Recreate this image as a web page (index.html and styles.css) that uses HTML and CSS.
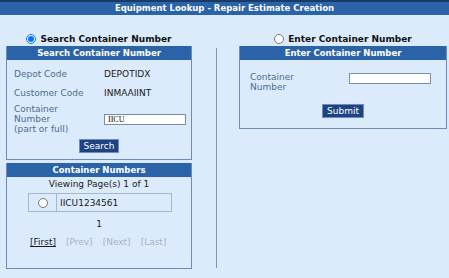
FILE: index.html
```html
<!DOCTYPE html>
<html>
  <head>
    <meta charset="utf-8" />
    <title>Equipment Lookup - Repair Estimate Creation</title>
    <link rel="stylesheet" href="styles.css">
  </head>
  <body>
    <!-- Page title bar -->
    <div class="titlebar">Equipment Lookup - Repair Estimate Creation</div>

    <div class="main">
      <!-- LEFT: search by partial number -->
      <div class="column left-col">
        <label class="choice">
          <input type="radio" name="mode" checked />
          <span>Search Container Number</span>
        </label>

        <div class="panel search-panel">
          <div class="panel-head">Search Container Number</div>
          <div class="form-grid">
            <span class="lbl">Depot Code</span>
            <span class="val">DEPOTIDX</span>
            <span class="lbl">Customer Code</span>
            <span class="val">INMAAIINT</span>
            <span class="lbl tall">Container<br />Number<br />(part or full)</span>
            <span class="val tall"><input type="text" class="txt" value="IICU" /></span>
          </div>
          <div class="btn-row"><button class="btn">Search</button></div>
        </div>

        <div class="panel results-panel">
          <div class="panel-head">Container Numbers</div>
          <p class="viewing">Viewing Page(s) 1 of 1</p>
          <table class="results">
            <tr>
              <td class="pick"><input type="radio" name="container" /></td>
              <td class="num">IICU1234561</td>
            </tr>
          </table>
          <p class="page-no">1</p>
          <div class="pager">
            <a href="#" class="on">[First]</a>
            <span>[Prev]</span>
            <span>[Next]</span>
            <span>[Last]</span>
          </div>
        </div>
      </div>

      <div class="divider"></div>

      <!-- RIGHT: enter full number -->
      <div class="column right-col">
        <label class="choice">
          <input type="radio" name="mode" />
          <span>Enter Container Number</span>
        </label>

        <div class="panel enter-panel">
          <div class="panel-head">Enter Container Number</div>
          <div class="enter-row">
            <span class="lbl">Container<br />Number</span>
            <input type="text" class="txt" />
          </div>
          <div class="btn-row"><button class="btn">Submit</button></div>
        </div>
      </div>
    </div>
  </body>
</html>
```

FILE: styles.css
```css
/* reset */
* {
  box-sizing: border-box;
  margin: 0;
  padding: 0;
}

body {
  font-family: 'DejaVu Sans', Verdana, sans-serif;
  font-size: 9px;
  background-color: #dcebfc;
  color: #1a1a1a;
  width: 449px;
  height: 278px;
  overflow: hidden;
}

/* top title bar */
.titlebar {
  height: 15px;
  line-height: 13px;
  border-top: 2px solid #173a66;
  background-color: #2b63a8;
  color: #ffffff;
  font-weight: bold;
  font-size: 8.5px;
  text-align: center;
}

.main {
  display: flex;
  padding-left: 6px;
}

.left-col {
  width: 186px;
}

.right-col {
  width: 208px;
}

.divider {
  width: 1px;
  height: 220px;
  margin: 33px 22px 0 24px;
  background-color: #8294ad;
}

/* radio choice above each panel */
.choice {
  display: flex;
  justify-content: center;
  align-items: center;
  gap: 4px;
  height: 15px;
  margin-top: 16px;
  font-weight: bold;
  font-size: 9px;
  color: #111;
}

.choice input {
  width: 10px;
  height: 10px;
  margin: 0;
}

/* panels */
.panel {
  border: 1px solid #6d8bb4;
  border-top: none;
}

.panel-head {
  height: 14px;
  line-height: 14px;
  background-color: #2b63a8;
  color: #ffffff;
  font-weight: bold;
  font-size: 8.5px;
  text-align: center;
}

.search-panel {
  height: 114px;
}

.form-grid {
  display: grid;
  grid-template-columns: 90px 1fr;
  row-gap: 9px;
  padding: 9px 0 0 7px;
  align-items: center;
}

.form-grid .tall {
  margin-top: -3px;
}

.lbl {
  color: #4b6b8f;
  line-height: 10px;
}

.val {
  color: #1a1a1a;
}

.txt {
  width: 82px;
  height: 11px;
  border: 1px solid #7a8ea8;
  background: #ffffff;
  font-family: 'Liberation Serif', serif;
  font-size: 8px;
  padding: 0 3px;
}

.btn-row {
  text-align: center;
}

.search-panel .btn-row {
  margin-top: 5px;
}

.btn {
  background-color: #1e4383;
  color: #ffffff;
  border: 1px solid #6f8cbf;
  font-family: 'DejaVu Sans', Verdana, sans-serif;
  font-size: 9px;
  padding: 1px 4px;
  height: 14px;
}

/* results list */
.results-panel {
  margin-top: 3px;
  height: 106px;
}

.viewing {
  text-align: center;
  margin-top: 2px;
  line-height: 11px;
}

.results {
  margin: 3px 0 0 21px;
  width: 144px;
  border-collapse: collapse;
  border: 1px solid #8096b4;
}

.results td {
  height: 18px;
  border: 1px solid #a7b6cb;
}

.results .pick {
  width: 28px;
  text-align: center;
}

.results .pick input {
  width: 10px;
  height: 10px;
  vertical-align: middle;
}

.results .num {
  padding-left: 3px;
}

.page-no {
  text-align: center;
  margin-top: 7px;
  line-height: 11px;
}

.pager {
  display: flex;
  gap: 10px;
  padding-left: 23px;
  margin-top: 7px;
  line-height: 11px;
}

.pager span {
  color: #a9b3c1;
}

.pager a {
  color: #1a1a1a;
}

/* enter panel */
.enter-panel {
  height: 83px;
}

.enter-row {
  display: flex;
  align-items: flex-start;
  padding: 12px 0 0 10px;
}

.enter-row .lbl {
  width: 99px;
}

.enter-row .txt {
  margin-top: 1px;
}

.enter-panel .btn-row {
  margin-top: 12px;
}
```
